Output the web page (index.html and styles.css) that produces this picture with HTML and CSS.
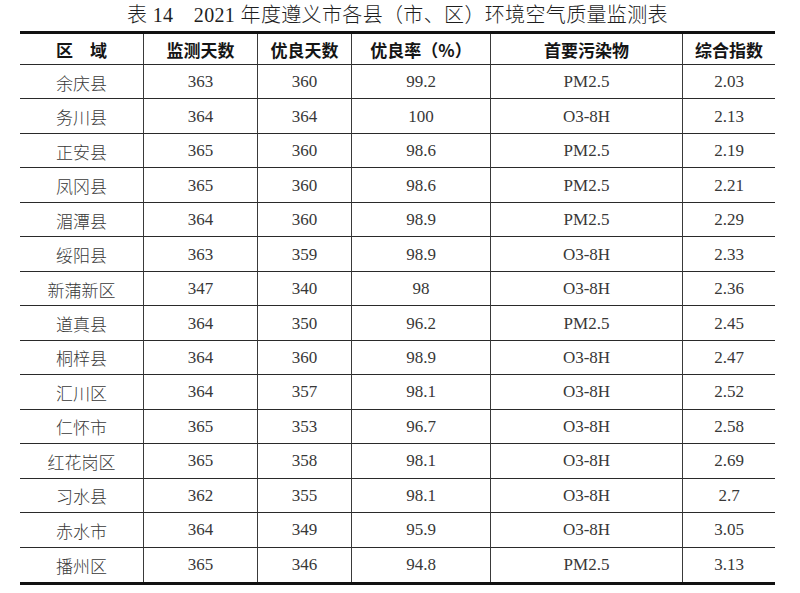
FILE: index.html
```html
<!DOCTYPE html>
<html lang="zh-CN">
<head>
<meta charset="utf-8">
<title>2021年度遵义市各县（市、区）环境空气质量监测表</title>
<link rel="stylesheet" href="styles.css">
</head>
<body>
<div class="page">
  <div class="caption">表 14　2021 年度遵义市各县（市、区）环境空气质量监测表</div>
  <table class="aq">
    <colgroup>
      <col class="c1"><col class="c2"><col class="c3"><col class="c4"><col class="c5"><col class="c6">
    </colgroup>
    <thead>
      <tr><th>区　域</th><th>监测天数</th><th>优良天数</th><th>优良率（%）</th><th>首要污染物</th><th>综合指数</th></tr>
    </thead>
    <tbody>
      <tr><td>余庆县</td><td>363</td><td>360</td><td>99.2</td><td>PM2.5</td><td>2.03</td></tr>
      <tr><td>务川县</td><td>364</td><td>364</td><td>100</td><td>O3-8H</td><td>2.13</td></tr>
      <tr><td>正安县</td><td>365</td><td>360</td><td>98.6</td><td>PM2.5</td><td>2.19</td></tr>
      <tr><td>凤冈县</td><td>365</td><td>360</td><td>98.6</td><td>PM2.5</td><td>2.21</td></tr>
      <tr><td>湄潭县</td><td>364</td><td>360</td><td>98.9</td><td>PM2.5</td><td>2.29</td></tr>
      <tr><td>绥阳县</td><td>363</td><td>359</td><td>98.9</td><td>O3-8H</td><td>2.33</td></tr>
      <tr><td>新蒲新区</td><td>347</td><td>340</td><td>98</td><td>O3-8H</td><td>2.36</td></tr>
      <tr><td>道真县</td><td>364</td><td>350</td><td>96.2</td><td>PM2.5</td><td>2.45</td></tr>
      <tr><td>桐梓县</td><td>364</td><td>360</td><td>98.9</td><td>O3-8H</td><td>2.47</td></tr>
      <tr><td>汇川区</td><td>364</td><td>357</td><td>98.1</td><td>O3-8H</td><td>2.52</td></tr>
      <tr><td>仁怀市</td><td>365</td><td>353</td><td>96.7</td><td>O3-8H</td><td>2.58</td></tr>
      <tr><td>红花岗区</td><td>365</td><td>358</td><td>98.1</td><td>O3-8H</td><td>2.69</td></tr>
      <tr><td>习水县</td><td>362</td><td>355</td><td>98.1</td><td>O3-8H</td><td>2.7</td></tr>
      <tr><td>赤水市</td><td>364</td><td>349</td><td>95.9</td><td>O3-8H</td><td>3.05</td></tr>
      <tr><td>播州区</td><td>365</td><td>346</td><td>94.8</td><td>PM2.5</td><td>3.13</td></tr>
    </tbody>
  </table>
</div>
</body>
</html>
```

FILE: styles.css
```css
html, body {
  margin: 0;
  padding: 0;
  background: #ffffff;
}

.page {
  width: 800px;
  padding: 0 25px 0 20px;
  box-sizing: border-box;
}

.caption {
  height: 31px;
  line-height: 30px;
  text-align: center;
  font-family: "Liberation Serif", "Noto Sans CJK SC", serif;
  font-size: 20px;
  font-weight: 300;
  letter-spacing: 0.35px;
  color: #1e1e1e;
  white-space: nowrap;
}

.aq {
  width: 755px;
  table-layout: fixed;
  border-collapse: separate;
  border-spacing: 0;
  border-top: 3px solid #111;
  border-bottom: 3px solid #111;
}

.c1 { width: 123px; }
.c2 { width: 114px; }
.c3 { width: 94px; }
.c4 { width: 139px; }
.c5 { width: 192px; }
.c6 { width: 93px; }

.aq th,
.aq td {
  padding: 0;
  text-align: center;
  vertical-align: middle;
  border-bottom: 1px solid #2a2a2a;
  border-left: 1px solid #3a3a3a;
  white-space: nowrap;
}

.aq th:first-child,
.aq td:first-child {
  border-left: none;
}

.aq thead tr {
  height: 31px;
}

.aq th {
  font-family: "Noto Sans CJK SC", sans-serif;
  font-weight: 700;
  font-size: 17px;
  color: #151515;
}

.aq tbody tr {
  height: 34.47px;
}

.aq tbody tr:last-child td {
  border-bottom: none;
}

.aq td {
  font-family: "Liberation Serif", "Noto Sans CJK SC", serif;
  font-size: 17px;
  font-weight: 300;
  color: #383838;
  padding-top: 1px;
}
```
